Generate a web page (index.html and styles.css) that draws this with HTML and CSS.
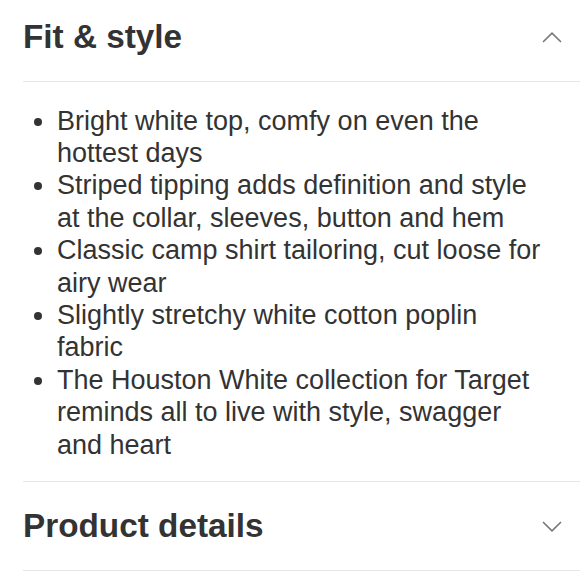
FILE: index.html
```html
<!DOCTYPE html>
<html>
<head>
<meta charset="utf-8">
<link rel="stylesheet" href="styles.css">
</head>
<body>
<div class="page">
  <section class="acc">
    <div class="acc-head">
      <h2 class="acc-title">Fit &amp; style</h2>
      <svg class="chev" width="20" height="11" viewBox="0 0 20 11"><path d="M1 10 L10 1.2 L19 10" fill="none" stroke="#777" stroke-width="1.6"/></svg>
    </div>
    <div class="acc-body">
      <ul class="bullets">
        <li>Bright white top, comfy on even the hottest days</li>
        <li>Striped tipping adds definition and style at the collar, sleeves, button and hem</li>
        <li>Classic camp shirt tailoring, cut loose for airy wear</li>
        <li>Slightly stretchy white cotton poplin fabric</li>
        <li>The Houston White collection for Target reminds all to live with style, swagger and heart</li>
      </ul>
    </div>
  </section>
  <section class="acc">
    <div class="acc-head closed">
      <h2 class="acc-title">Product details</h2>
      <svg class="chev" width="20" height="11" viewBox="0 0 20 11"><path d="M1 1 L10 9.8 L19 1" fill="none" stroke="#777" stroke-width="1.6"/></svg>
    </div>
  </section>
</div>
</body>
</html>
```
FILE: styles.css
```css
html, body { margin: 0; padding: 0; background: #fff; }
body { font-family: "Liberation Sans", Arial, sans-serif; color: #333; width: 580px; overflow: hidden; }
.page { padding-left: 23px; }
.acc-head {
  display: flex; align-items: center; justify-content: space-between;
  height: 81.5px; border-bottom: 1.5px solid #e6e6e6; box-sizing: border-box;
  padding: 0 18px 6px 0;
}
.acc-title { margin: 0; font-size: 33.3px; font-weight: bold; color: #333; line-height: 40px; }
.chev { display: block; }
.acc-body { border-bottom: 1.5px solid #e6e6e6; padding: 23px 0 20px; }
.bullets { margin: 0; padding: 0 0 0 34px; font-size: 27px; line-height: 32.4px; color: #333; }
.bullets li { margin: 0; padding-right: 35px; }
.acc-head.closed { height: 89.5px; padding-bottom: 0; }
```
